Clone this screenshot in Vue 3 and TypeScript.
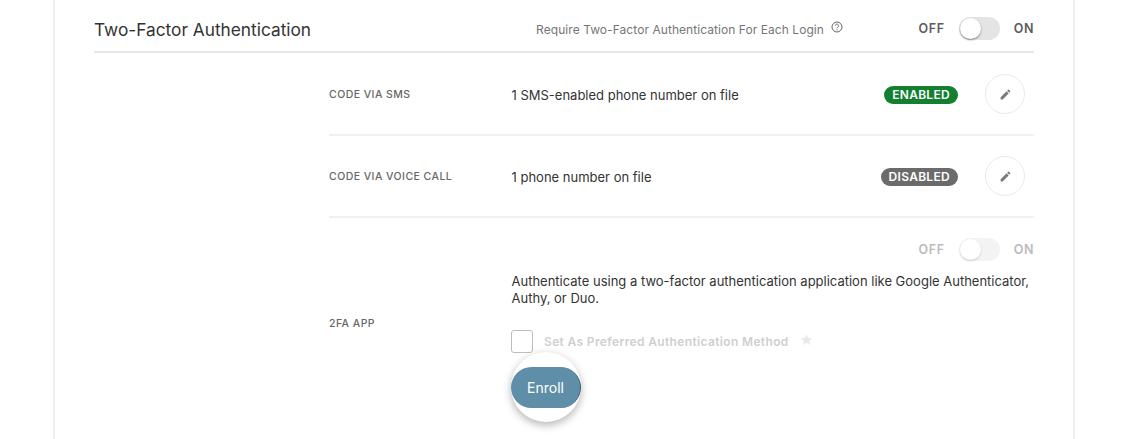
<script setup lang="ts">
interface Row { label: string; text: string; badge: string; tone: string }
const rows: Row[] = [
  { label: 'CODE VIA SMS', text: '1 SMS-enabled phone number on file', badge: 'ENABLED', tone: 'on' },
  { label: 'CODE VIA VOICE CALL', text: '1 phone number on file', badge: 'DISABLED', tone: 'off' },
]
</script>

<template>
  <div class="page">
    <section class="card">
      <header class="head">
        <h2 class="title">Two-Factor Authentication</h2>
        <span class="require">Require Two-Factor Authentication For Each Login</span>
        <svg class="help" viewBox="0 0 12 12" width="12" height="12" aria-hidden="true">
          <circle cx="6" cy="6" r="5" fill="none" stroke="#666" stroke-width="1" />
          <path d="M4.4 4.7a1.6 1.6 0 1 1 2.4 1.4c-.5.3-.8.6-.8 1.1" fill="none" stroke="#666" stroke-width="1" />
          <circle cx="6" cy="8.8" r=".6" fill="#666" />
        </svg>
        <div class="switch">
          <span class="sw-label">OFF</span>
          <span class="track"><span class="knob"></span></span>
          <span class="sw-label">ON</span>
        </div>
      </header>

      <div class="rows">
        <div v-for="r in rows" :key="r.label" class="row">
          <div class="label">{{ r.label }}</div>
          <div class="text">{{ r.text }}</div>
          <span class="badge" :class="r.tone">{{ r.badge }}</span>
          <button class="edit" type="button" aria-label="Edit">
            <svg viewBox="0 0 24 24" width="13" height="13" aria-hidden="true">
              <path fill="#7a7a7a" d="M3 17.25V21h3.75L17.81 9.94l-3.75-3.75L3 17.25zM20.71 7.04a1 1 0 0 0 0-1.41l-2.34-2.34a1 1 0 0 0-1.41 0l-1.83 1.83 3.75 3.75 1.83-1.83z" />
            </svg>
          </button>
        </div>

        <div class="row app">
          <div class="label">2FA APP</div>
          <div class="app-body">
            <div class="switch dim">
              <span class="sw-label">OFF</span>
              <span class="track"><span class="knob"></span></span>
              <span class="sw-label">ON</span>
            </div>
            <p class="desc">Authenticate using a two-factor authentication application like Google Authenticator, Authy, or Duo.</p>
            <div class="pref">
              <span class="check"></span>
              <span class="pref-text">Set As Preferred Authentication Method</span>
              <span class="star">★</span>
            </div>
            <div class="spot">
              <button class="enroll" type="button">Enroll</button>
            </div>
          </div>
        </div>
      </div>
    </section>
  </div>
</template>

<style>
html, body { margin: 0; background: #fff; }
</style>

<style scoped>
.page {
  width: 1125px;
  height: 439px;
  overflow: hidden;
  box-sizing: border-box;
  padding-left: 53px;
  font-family: Inter, "Liberation Sans", sans-serif;
  color: #2b2b2b;
}
.card {
  width: 1022px;
  height: 480px;
  box-sizing: border-box;
  border-left: 2px solid #f0f0f0;
  border-right: 2px solid #f0f0f0;
  padding: 0 39px;
}
.head {
  display: flex;
  align-items: center;
  height: 53px;
  padding-top: 6px;
  box-sizing: border-box;
  border-bottom: 2px solid #e6e6e6;
}
.title {
  margin: 2px 0 0;
  font-size: 17.3px;
  font-weight: 400;
  color: #333;
  line-height: 1;
}
.require {
  margin: 2px 0 0 225px;
  font-size: 12px;
  color: #767676;
  letter-spacing: .06px;
}
.help { margin: -3px 0 0 7px; }
.switch {
  display: flex;
  align-items: center;
  margin-left: auto;
  gap: 14px;
}
.sw-label {
  font-size: 12.5px;
  font-weight: 600;
  color: #5c5c5c;
  letter-spacing: .6px;
}
.track {
  display: block;
  width: 41px;
  height: 23px;
  border-radius: 12px;
  background: #e4e4e4;
}
.knob {
  display: block;
  width: 21px;
  height: 21px;
  margin: 1px;
  border-radius: 50%;
  background: #fff;
  box-shadow: 0 1px 2px rgba(0, 0, 0, .45);
}
.dim { opacity: .42; justify-content: flex-end; }
.rows { margin-left: 235px; padding-top: 1px; }
.row {
  display: flex;
  align-items: center;
  height: 82px;
  padding-top: 1px;
  box-sizing: border-box;
  border-bottom: 2px solid #f0f0f0;
}
.label {
  width: 182.5px;
  flex: none;
  font-size: 10.5px;
  font-weight: 500;
  color: #666;
  letter-spacing: .45px;
}
.text {
  flex: 1;
  font-size: 13px;
  color: #333;
}
.badge {
  height: 18px;
  line-height: 18px;
  padding: 0 8px;
  border-radius: 9px;
  font-size: 12px;
  font-weight: 600;
  color: #fff;
  letter-spacing: .3px;
}
.badge.on { background: #12802f; }
.badge.off { background: #6b6b6b; }
.edit {
  width: 40px;
  height: 40px;
  margin: -1px 9px 0 27px;
  padding: 0;
  display: flex;
  align-items: center;
  justify-content: center;
  background: #fff;
  border: 1px solid #eaeaea;
  border-radius: 50%;
}
.app { height: 240px; align-items: flex-start; border-bottom: 0; }
.app .label { margin-top: 98px; }
.app-body {
  flex: 1;
  display: flex;
  flex-direction: column;
  padding-top: 19px;
}
.desc {
  margin: 12px 0 0;
  font-size: 13px;
  line-height: 16.5px;
  color: #333;
}
.pref {
  display: flex;
  align-items: center;
  margin-top: 24px;
}
.check {
  width: 20px;
  height: 21px;
  margin-left: -.5px;
  border: 1px solid #bdbdbd;
  border-radius: 3px;
}
.pref-text {
  margin-left: 11px;
  font-size: 12px;
  font-weight: 600;
  color: #cfcfcf;
  letter-spacing: .35px;
}
.star {
  margin: -4px 0 0 11px;
  font-size: 15px;
  color: #e8e8e8;
  font-family: "DejaVu Sans", sans-serif;
}
.spot {
  width: 70px;
  height: 70px;
  margin: -1px 0 0 -.5px;
  display: flex;
  align-items: center;
  border-radius: 50%;
  background: #fff;
  box-shadow: 0 3px 9px rgba(0, 0, 0, .3);
}
.enroll {
  width: 70px;
  height: 41px;
  border: 0;
  border-right: 1px solid #3f5f73;
  border-radius: 21px;
  background: #5f8fa8;
  color: #fff;
  font-family: inherit;
  font-size: 14px;
}
</style>
